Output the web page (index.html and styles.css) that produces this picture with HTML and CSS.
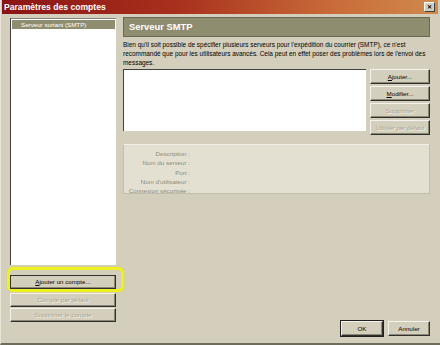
FILE: index.html
```html
<!DOCTYPE html>
<html lang="fr">
<head>
  <meta charset="UTF-8">
  <title>Paramètres des comptes</title>
  <link rel="stylesheet" href="styles.css">
</head>
<body>

  <div class="window">
    <div class="titlebar">
      <span class="title">Paramètres des comptes</span>
      <span class="close">&#x2715;</span>
    </div>

    <div class="content">
      <!-- colonne de gauche -->
      <div class="left">
        <div class="accounts">
          <div class="account selected">Serveur sortant (SMTP)</div>
        </div>
        <div class="highlight">
          <button class="btn wide"><u>A</u>jouter un compte...</button>
        </div>
        <button class="btn wide disabled">Compte par défaut</button>
        <button class="btn wide disabled">Supprimer le compte</button>
      </div>

      <!-- colonne de droite -->
      <div class="right">
        <div class="heading">Serveur SMTP</div>
        <p class="intro">Bien qu'il soit possible de spécifier plusieurs serveurs pour l'expédition du courrier (SMTP), ce n'est recommandé que pour les utilisateurs avancés. Cela peut en effet poser des problèmes lors de l'envoi des messages.</p>

        <div class="servers">
          <div class="serverlist"></div>
          <div class="serverbtns">
            <button class="btn"><u>A</u>jouter...</button>
            <button class="btn"><u>M</u>odifier...</button>
            <button class="btn disabled">Supprimer</button>
            <button class="btn disabled">Utiliser par défaut</button>
          </div>
        </div>

        <div class="details">
          <div class="row"><span class="label">Description :</span></div>
          <div class="row"><span class="label">Nom du serveur :</span></div>
          <div class="row"><span class="label">Port :</span></div>
          <div class="row"><span class="label">Nom d'utilisateur :</span></div>
          <div class="row"><span class="label">Connexion sécurisée :</span></div>
        </div>

        <div class="footer">
          <button class="btn default">OK</button>
          <button class="btn">Annuler</button>
        </div>
      </div>
    </div>
  </div>

</body>
</html>
```

FILE: styles.css
```css
body {
  margin: 0;
  padding: 0;
  background: #d3cfbc;
  font-family: "Liberation Sans", Arial, sans-serif;
}
.window {
  width: 440px;
  height: 345px;
  box-sizing: border-box;
  background: #d3cfbc;
  border-bottom: 2px solid #6e6c5a;
  border-left: 1px solid #e8e5d8;
  display: flex;
  flex-direction: column;
}
.titlebar {
  height: 14px;
  margin: 0 2px 0 1px;
  background: linear-gradient(to right, #8a1414 0%, #a8301c 40%, #c86a38 75%, #d08a4c 100%);
  display: flex;
  align-items: center;
  justify-content: space-between;
  padding: 0 3px 0 2px;
}
.title {
  color: #fff;
  font-weight: bold;
  font-size: 8.6px;
}
.close {
  width: 9px;
  height: 8px;
  background: #d3cfbc;
  border: 1px solid;
  border-color: #fff #404040 #404040 #fff;
  font-size: 6px;
  font-weight: bold;
  line-height: 8px;
  text-align: center;
  color: #000;
}
.content {
  flex: 1;
  display: flex;
  padding: 4px 10px 7px 9px;
  gap: 7px;
}
.left {
  width: 106px;
  display: flex;
  flex-direction: column;
}
.accounts {
  height: 247px;
  box-sizing: border-box;
  background: #fff;
  border-left: 1px solid #404040;
  border-top: 1px solid #808080;
  padding: 1px 0 0 0;
}
.account {
  font-size: 6.2px;
  height: 9px;
  line-height: 9px;
  padding-left: 9px;
  color: #fff;
}
.account.selected {
  background: #8f8d6f;
  margin: 0 1px;
}
.btn {
  font-family: "Liberation Sans", Arial, sans-serif;
  font-size: 6.2px;
  color: #000;
  background: #d3cfbc;
  border: 1px solid;
  border-color: #f4f2ea #303030 #303030 #f4f2ea;
  box-shadow: inset -1px -1px 0 #8a8872;
  padding: 0;
  height: 15px;
  margin: 0;
}
.btn u {
  text-decoration: underline;
}
.btn.disabled {
  color: #a9a693;
  text-shadow: 1px 1px 0 #f4f2ea;
}
.btn.wide {
  width: 106px;
  height: 14px;
  margin-top: 1px;
}
.highlight {
  margin: 2px -8px 0 -3px;
  padding: 0 5px 0 0;
  border: 3px solid #eef020;
  border-radius: 6px;
  box-shadow: 0 0 2px #d8d850;
}
.highlight .btn {
  margin-top: 0;
  border-color: #303030;
}
.right {
  flex: 1;
  display: flex;
  flex-direction: column;
}
.heading {
  height: 18px;
  background: #8f8d6f;
  border: 1px solid #6a6852;
  color: #fff;
  font-weight: bold;
  font-size: 9.4px;
  line-height: 18px;
  padding-left: 5px;
  margin-top: -1px;
}
.intro {
  margin: 3px 0 2px 0;
  font-size: 6.45px;
  line-height: 9px;
  color: #000;
}
.servers {
  display: flex;
  gap: 4px;
}
.serverlist {
  width: 242px;
  height: 61px;
  background: #fff;
  border-top: 1px solid #404040;
  border-left: 1px solid #404040;
}
.serverbtns {
  flex: 1;
  display: flex;
  flex-direction: column;
  gap: 2px;
}
.details {
  margin-top: 9px;
  background: #e3e0d2;
  border: 1px solid #c2beaa;
  border-top-color: #f0eee6;
  padding: 1px 0 1px 0;
}
.row {
  height: 9.3px;
  line-height: 9.3px;
}
.label {
  display: inline-block;
  width: 66px;
  text-align: right;
  font-size: 6.2px;
  color: #8e8b78;
}
.footer {
  margin-top: auto;
  display: flex;
  justify-content: flex-end;
  gap: 5px;
}
.footer .btn {
  width: 42px;
}
.footer .btn.default {
  outline: 1px solid #202020;
}
```
